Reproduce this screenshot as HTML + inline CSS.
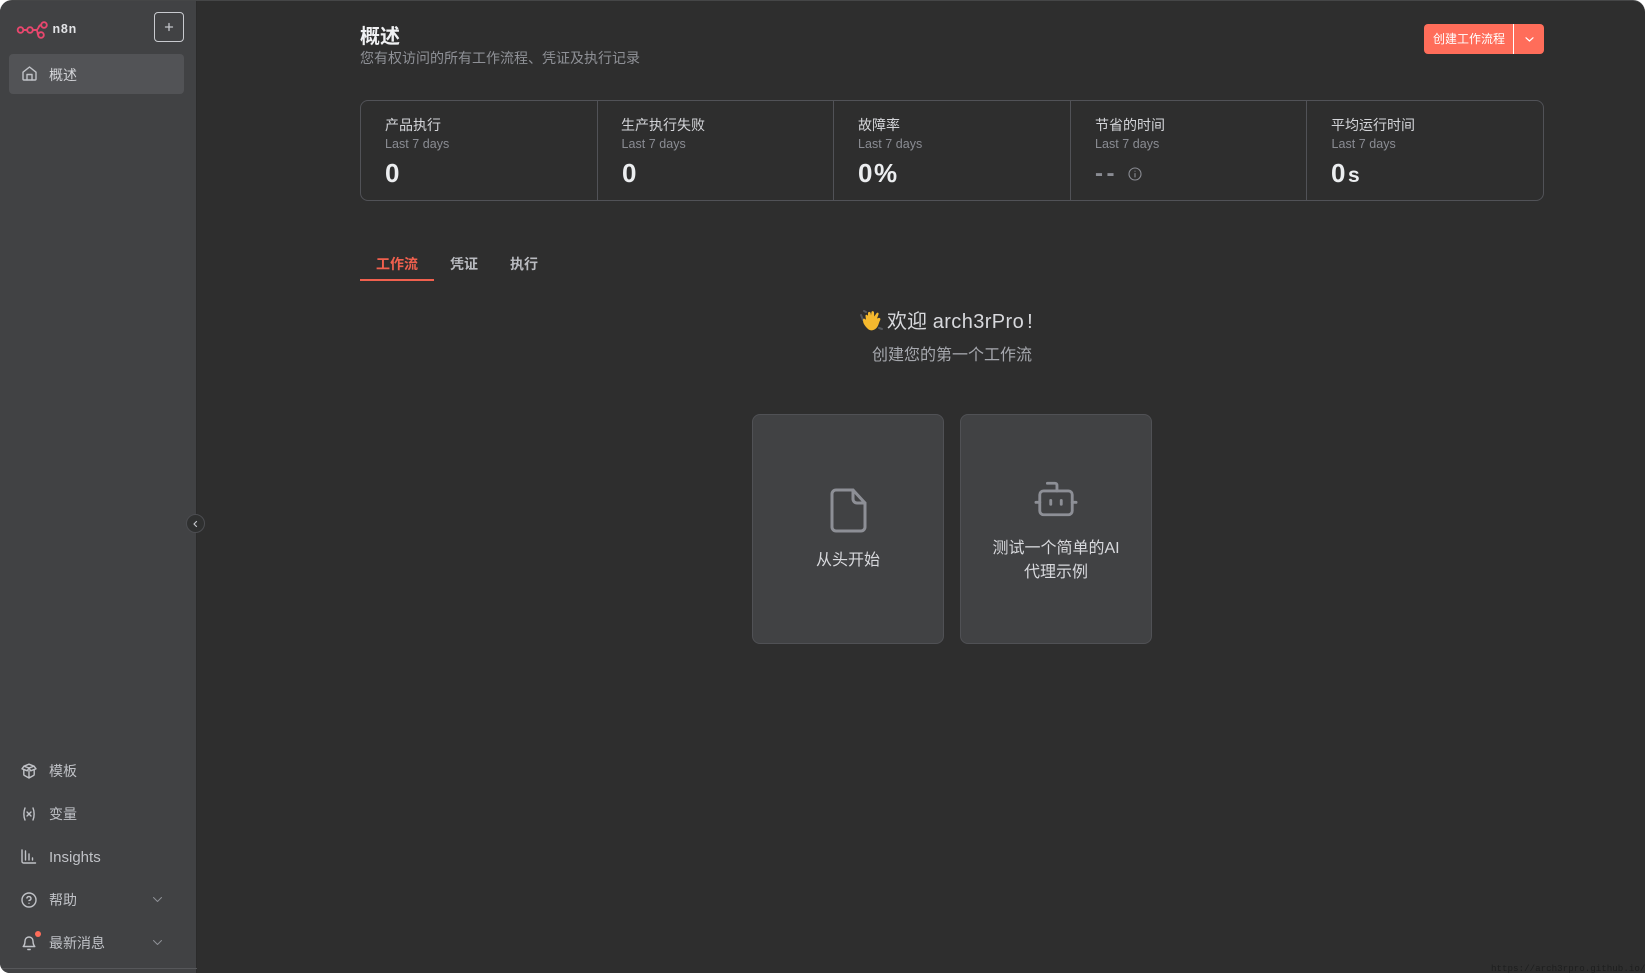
<!DOCTYPE html>
<html lang="zh">
<head>
<meta charset="utf-8">
<title>n8n</title>
<style>
*{box-sizing:border-box;margin:0;padding:0}
html,body{width:1645px;height:973px;overflow:hidden;background:#fff}
body{font-family:"Liberation Sans","Noto Sans CJK SC",sans-serif;position:relative}
#app{position:absolute;left:0;top:0;width:1645px;height:973px;background:#2e2e2e;border-radius:12px 12px 0 10px;overflow:hidden;border-top:1px solid #454647}
.t{position:absolute;white-space:nowrap;line-height:20px}
#side{position:absolute;left:0;top:-1px;width:197px;height:973px;background:#414244;border-right:1px solid #2b2b2b}
.nav{font-size:14px;color:#c0c2c7;left:49px}
svg{position:absolute;overflow:visible}
.ic{fill:none;stroke:#c0c2c7;stroke-width:1.4;stroke-linecap:round;stroke-linejoin:round}
#stats{position:absolute;left:360px;top:99px;width:1184px;height:101px;border:1px solid #515257;border-radius:8px}
.div{position:absolute;top:0;width:1px;height:99px;background:#515257}
.st{font-size:14px;color:#d4d5d9;top:114px}
.sl{font-size:12.5px;color:#8a8c93;top:133px;letter-spacing:.03px}
.sv{font-size:26px;font-weight:bold;color:#eceef0;top:162px;line-height:20px}
.card{position:absolute;top:413px;width:192px;height:230px;background:#414244;border:1px solid #505155;border-radius:8px}
</style>
</head>
<body>
<div id="app">
  <div id="side">
    <svg style="left:0;top:0" width="60" height="50" viewBox="0 0 60 50" fill="none" stroke="#e8476e" stroke-width="1.9">
      <circle cx="20.5" cy="30" r="2.8"/><circle cx="30" cy="30" r="2.8"/><circle cx="44" cy="25" r="2.8"/><circle cx="41" cy="35" r="2.8"/>
      <path d="M23.3 30h3.9M32.8 30h3.2c3 0 2-5 5.2-5M36 30c2 0 1.5 5 2.2 5"/>
    </svg>
    <div class="t" style="left:52.500px;top:19px;font-size:12.5px;font-weight:bold;color:#e2e3e6;letter-spacing:.8px">n8n</div>
    <div style="position:absolute;left:154px;top:12px;width:30px;height:30px;border:1px solid #c8cacf;border-radius:4px"></div>
    <svg style="left:165px;top:23px" width="8" height="8" viewBox="0 0 8 8"><path d="M4 .5v7M.5 4h7" stroke="#c4c6cb" stroke-width="1.300" stroke-linecap="round"/></svg>
    <div style="position:absolute;left:9px;top:54px;width:175px;height:40px;background:#525356;border-radius:4px"></div>

    <svg class="ic" style="left:21.500px;top:66px" width="15" height="15" viewBox="0 0 15 15"><path d="M1 6.200 7.500 1 14 6.200V13a1 1 0 0 1-1 1H2a1 1 0 0 1-1-1Z"/><path d="M5 14V8.500h5V14"/></svg>
    <div class="t nav" style="top:65px;color:#d4d5d9">概述</div>

    <svg class="ic" style="left:21px;top:763px" width="16" height="16" viewBox="0 0 16 16"><path d="M8 5 3 3.200 8 1.200l5 2Z"/><path d="M3 3.200 1 5.800l5.300 2L8 5l1.700 2.800 5.300-2-2-2.600"/><path d="M2.800 7.200v4.300c0 .4.200.7.500.9L8 15l4.700-2.600c.3-.2.500-.5.500-.9V7.200M8 8v7"/></svg>
    <div class="t nav" style="top:761px">模板</div>

    <svg class="ic" style="left:22px;top:806px" width="14" height="16" viewBox="0 0 14 16"><path d="M3 2C1.500 5.500 1.500 10.500 3 14M11 2c1.500 3.500 1.500 8.500 0 12M5 6l4 4M9 6l-4 4"/></svg>
    <div class="t nav" style="top:804px">变量</div>

    <svg class="ic" style="left:21px;top:849px" width="15" height="15" viewBox="0 0 15 15"><path d="M1 1v11.500a1.500 1.500 0 0 0 1.500 1.500H14.500M4.500 2v9M8 5v6M11.500 9v2"/></svg>
    <div class="t nav" style="top:848px;font-size:15px">Insights</div>

    <svg class="ic" style="left:21px;top:892px" width="16" height="16" viewBox="0 0 16 16"><circle cx="8" cy="8" r="7"/><path d="M5.900 6a2.100 2.100 0 0 1 4.100.6c0 1.400-2 1.900-2 1.900M8 11.300h0"/></svg>
    <div class="t nav" style="top:890px">帮助</div>
    <svg class="ic" style="left:153px;top:897px;stroke-width:1;stroke:#8f9197" width="9" height="5" viewBox="0 0 9 5"><path d="M.5.500 4.500 4.500 8.500.500"/></svg>

    <svg class="ic" style="left:22px;top:935px" width="14" height="16" viewBox="0 0 14 16"><path d="M3 6a4 4 0 0 1 8 0c0 4 1.800 5.500 1.800 5.500H1.200S3 10 3 6ZM5.800 14.500h2.400"/></svg>
    <div style="position:absolute;left:35px;top:931px;width:6px;height:6px;background:#ff6d5a;border-radius:50%"></div>
    <div class="t nav" style="top:933px">最新消息</div>
    <svg class="ic" style="left:153px;top:940px;stroke-width:1;stroke:#8f9197" width="9" height="5" viewBox="0 0 9 5"><path d="M.5.500 4.500 4.500 8.500.500"/></svg>

    <div style="position:absolute;left:0;top:968px;width:197px;height:1px;background:#56575a"></div>
  </div>

  <div style="position:absolute;left:185.500px;top:513px;width:19px;height:19px;border-radius:50%;background:#2f3030;border:1px solid #4c4d51"></div>
  <svg style="left:192px;top:518.500px" width="6" height="8" viewBox="0 0 6 8"><path d="M4.500 1.500 2 4l2.500 2.500" fill="none" stroke="#c4c6cb" stroke-width="1.200" stroke-linecap="round" stroke-linejoin="round"/></svg>

  <div class="t" style="left:360px;top:26px;font-size:20px;font-weight:bold;color:#f0f1f3">概述</div>
  <div class="t" style="left:360px;top:47px;font-size:14px;color:#8f9197">您有权访问的所有工作流程、凭证及执行记录</div>

  <div style="position:absolute;left:1424px;top:23px;width:120px;height:30px;background:#ff6d5a;border-radius:4px"></div>
  <div style="position:absolute;left:1513px;top:23px;width:1px;height:30px;background:#fff"></div>
  <div class="t" style="left:1433px;top:28px;font-size:12px;color:#fff">创建工作流程</div>
  <svg style="left:1525px;top:36px" width="9" height="5" viewBox="0 0 9 5"><path d="M1 .8 4.500 4 8 .8" fill="none" stroke="#fff" stroke-width="1.200" stroke-linecap="round" stroke-linejoin="round"/></svg>

  <div id="stats">
    <div class="div" style="left:236px"></div>
    <div class="div" style="left:472px"></div>
    <div class="div" style="left:709px"></div>
    <div class="div" style="left:945px"></div>
  </div>

  <div class="t st" style="left:385px">产品执行</div>
  <div class="t sl" style="left:385px">Last 7 days</div>
  <div class="t sv" style="left:385px">0</div>

  <div class="t st" style="left:621px">生产执行失败</div>
  <div class="t sl" style="left:621.500px">Last 7 days</div>
  <div class="t sv" style="left:622px">0</div>

  <div class="t st" style="left:858px">故障率</div>
  <div class="t sl" style="left:858px">Last 7 days</div>
  <div class="t sv" style="left:858px;letter-spacing:1.500px">0%</div>

  <div class="t st" style="left:1095px">节省的时间</div>
  <div class="t sl" style="left:1095px">Last 7 days</div>
  <div class="t sv" style="left:1095px;top:163px;color:#8a8c93;font-size:24px;letter-spacing:3.500px">--</div>
  <svg style="left:1128px;top:166px" width="14" height="14" viewBox="0 0 14 14" fill="none" stroke="#8a8c93" stroke-width="1.100" stroke-linecap="round"><circle cx="7" cy="7" r="6"/><path d="M7 6.500v3.500M7 4.200h0"/></svg>

  <div class="t st" style="left:1331px">平均运行时间</div>
  <div class="t sl" style="left:1331.500px">Last 7 days</div>
  <div class="t sv" style="left:1331px;letter-spacing:2.500px">0<span style="font-size:21px">s</span></div>

  <div class="t" style="left:376px;top:253px;font-size:14px;font-weight:bold;color:#f0604e">工作流</div>
  <div style="position:absolute;left:360px;top:278px;width:74px;height:2px;background:#f0604e"></div>
  <div class="t" style="left:450px;top:253px;font-size:14px;font-weight:bold;color:#b9bbc0">凭证</div>
  <div class="t" style="left:510px;top:253px;font-size:14px;font-weight:bold;color:#b9bbc0">执行</div>

  <svg style="left:860px;top:307px" width="24" height="24" viewBox="0 0 24 24">
    <path d="M3 12 1 7M6 4 4 3M19 20l3 1" stroke="#55585e" stroke-width="2" stroke-linecap="round" fill="none"/>
    <path d="M8 21C4 17 3 15 3 12c0-2 2-1.500 3 0L5.500 8c0-1.800 2-1.500 2.500 0L8 5c.5-1.800 2.500-1.300 2.700.3L11 7.500 11.500 4c.5-1.500 2.500-1 2.500.5l.2 4 2.500-3.500c1.300-1 2.300.2 1.800 1.500L17 10.500 18.500 10c1.500-.5 2.500 1 1.500 2.500-.8 1.200-1.200 3.500-2.200 5.500-1.800 3.700-6.500 6-9.800 3Z" fill="#f5b92e"/>
  </svg>
  <div class="t" style="left:887px;top:309px;font-size:20px;color:#d8d9dd;line-height:24px;letter-spacing:.05px">欢迎 <span style="letter-spacing:.4px">arch3rPro</span><span style="margin-left:3px">!</span></div>
  <div class="t" style="left:872px;top:344px;font-size:16px;color:#a6a8ae;line-height:22px">创建您的第一个工作流</div>

  <div class="card" style="left:752px"></div>
  <div class="card" style="left:960px"></div>

  <svg style="left:830px;top:487px" width="37" height="45" viewBox="0 0 37 45" fill="none" stroke="#8d8f96" stroke-width="3" stroke-linecap="round" stroke-linejoin="round">
    <path d="M23 2H6a4 4 0 0 0-4 4v33a4 4 0 0 0 4 4h25a4 4 0 0 0 4-4V15Z"/>
    <path d="M23 2v9a4 4 0 0 0 4 4h8"/>
  </svg>
  <div class="t" style="left:752px;width:192px;text-align:center;top:548px;font-size:16px;line-height:24px;color:#d8d9dd">从头开始</div>

  <svg style="left:1035px;top:480px" width="42" height="36" viewBox="0 0 44 37" fill="none" stroke="#8d8f96" stroke-width="3" stroke-linecap="round" stroke-linejoin="round">
    <path d="M13 2h8a2 2 0 0 1 2 2v6"/>
    <rect x="5" y="10" width="34" height="25" rx="4"/>
    <path d="M1 22h4M39 22h4M16.500 20v4M27.500 20v4"/>
  </svg>
  <div class="t" style="left:960px;width:192px;text-align:center;top:536px;font-size:16px;line-height:24px;color:#d8d9dd;white-space:normal">测试一个简单的AI<br>代理示例</div>

  <div class="t" style="left:1491px;top:962px;font-family:'Liberation Mono',monospace;font-size:9.200px;line-height:12px;color:#1d1e1e">https://arch3rpro.github.io/</div>
</div>
</body>
</html>
